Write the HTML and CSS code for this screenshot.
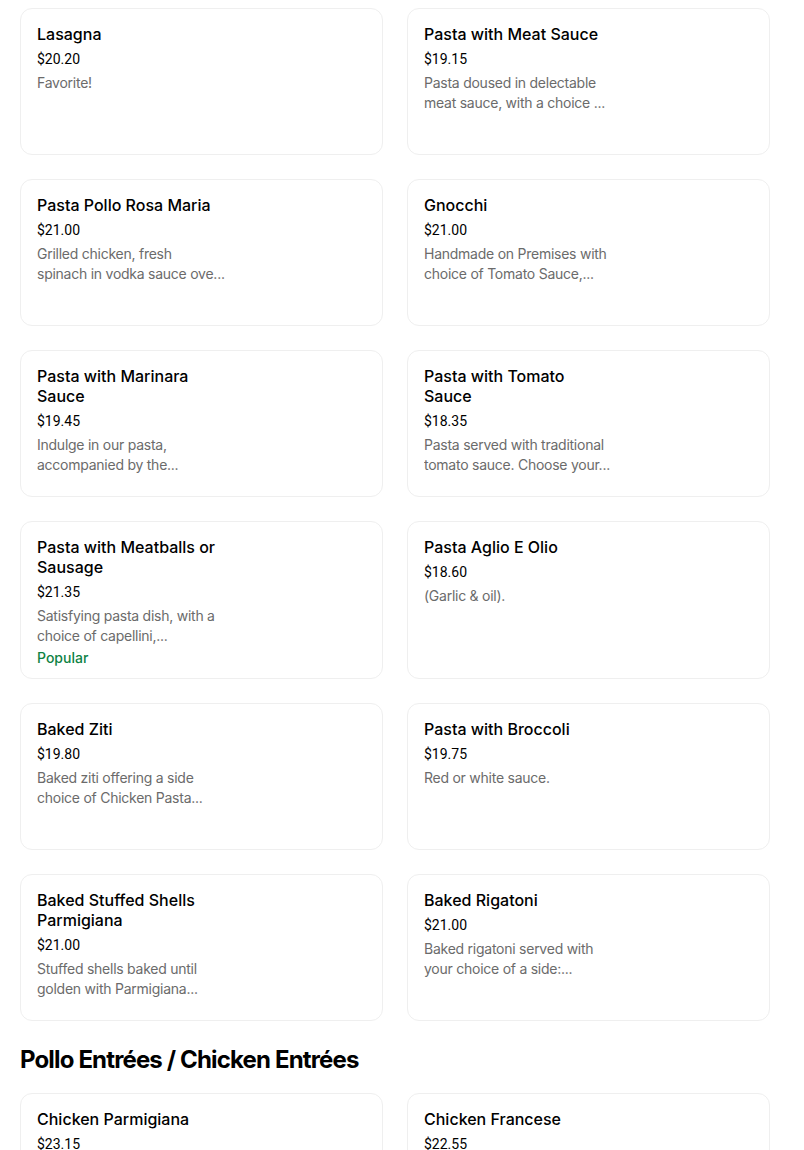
FILE: index.html
```html
<!DOCTYPE html>
<html lang="en">
<head>
<meta charset="utf-8">
<title>Menu</title>
<link rel="stylesheet" href="styles.css">
</head>
<body>
<main class="menu">
  <ul class="grid">
    <li class="card"><div class="info"><h3 class="title">Lasagna</h3><div class="price">$20.20</div><p class="desc">Favorite!</p></div></li>
    <li class="card"><div class="info"><h3 class="title">Pasta with Meat Sauce</h3><div class="price">$19.15</div><p class="desc">Pasta doused in delectable meat sauce, with a choice ...</p></div></li>
    <li class="card"><div class="info"><h3 class="title">Pasta Pollo Rosa Maria</h3><div class="price">$21.00</div><p class="desc">Grilled chicken, fresh spinach in vodka sauce ove...</p></div></li>
    <li class="card"><div class="info"><h3 class="title">Gnocchi</h3><div class="price">$21.00</div><p class="desc">Handmade on Premises with choice of Tomato Sauce,...</p></div></li>
    <li class="card"><div class="info"><h3 class="title">Pasta with Marinara Sauce</h3><div class="price">$19.45</div><p class="desc">Indulge in our pasta, accompanied by the...</p></div></li>
    <li class="card"><div class="info"><h3 class="title">Pasta with Tomato Sauce</h3><div class="price">$18.35</div><p class="desc">Pasta served with traditional tomato sauce. Choose your...</p></div></li>
    <li class="card"><div class="info"><h3 class="title">Pasta with Meatballs or Sausage</h3><div class="price">$21.35</div><p class="desc">Satisfying pasta dish, with a choice of capellini,...</p><div class="tag">Popular</div></div></li>
    <li class="card"><div class="info"><h3 class="title">Pasta Aglio E Olio</h3><div class="price">$18.60</div><p class="desc">(Garlic &amp; oil).</p></div></li>
    <li class="card"><div class="info"><h3 class="title">Baked Ziti</h3><div class="price">$19.80</div><p class="desc">Baked ziti offering a side choice of Chicken Pasta...</p></div></li>
    <li class="card"><div class="info"><h3 class="title">Pasta with Broccoli</h3><div class="price">$19.75</div><p class="desc">Red or white sauce.</p></div></li>
    <li class="card"><div class="info"><h3 class="title">Baked Stuffed Shells Parmigiana</h3><div class="price">$21.00</div><p class="desc">Stuffed shells baked until golden with Parmigiana...</p></div></li>
    <li class="card"><div class="info"><h3 class="title">Baked Rigatoni</h3><div class="price">$21.00</div><p class="desc">Baked rigatoni served with your choice of a side:...</p></div></li>
  </ul>
  <h2 class="section-title">Pollo Entrées / Chicken Entrées</h2>
  <ul class="grid">
    <li class="card"><div class="info"><h3 class="title">Chicken Parmigiana</h3><div class="price">$23.15</div><p class="desc">Breaded chicken cutlet topped with tomato sauce...</p></div></li>
    <li class="card"><div class="info"><h3 class="title">Chicken Francese</h3><div class="price">$22.55</div><p class="desc">Chicken in a lemon butter white wine sauce.</p></div></li>
  </ul>
</main>
</body>
</html>
```
FILE: styles.css
```css
* { box-sizing: border-box; }
html, body { margin: 0; padding: 0; background: #ffffff; }
body {
  font-family: Inter, "Noto Sans", "Liberation Sans", sans-serif;
  color: #000000;
  overflow: hidden;
}
.menu {
  padding: 8px 0 0 20px;
  width: 770px;
}
.grid {
  list-style: none;
  margin: 0;
  padding: 0;
  display: grid;
  grid-template-columns: 363px 363px;
  column-gap: 24px;
  row-gap: 24px;
}
.card {
  border: 1px solid #efefef;
  border-radius: 12px;
  min-height: 147px;
  padding: 15px 16px 10px 16px;
  display: flex;
}
.info {
  width: 188px;
  display: flex;
  flex-direction: column;
}
.title {
  margin: 0;
  font-size: 16px;
  line-height: 20px;
  font-weight: 500;
  color: #000000;
}
.price {
  margin-top: 5px;
  font-family: Roboto, "Liberation Sans", sans-serif;
  font-size: 14px;
  line-height: 20px;
  font-weight: 400;
  color: #000000;
}
.desc {
  margin: 4px 0 0 0;
  font-size: 14px;
  line-height: 20px;
  letter-spacing: -0.25px;
  color: #6b6b6b;
  display: -webkit-box;
  -webkit-line-clamp: 2;
  -webkit-box-orient: vertical;
  overflow: hidden;
}
.tag {
  margin-top: 2px;
  font-size: 14px;
  line-height: 20px;
  font-weight: 500;
  color: #0e8345;
}
.section-title {
  margin: 23px 0 17px 0;
  font-size: 24px;
  line-height: 32px;
  font-weight: 700;
  letter-spacing: -0.85px;
}
```
